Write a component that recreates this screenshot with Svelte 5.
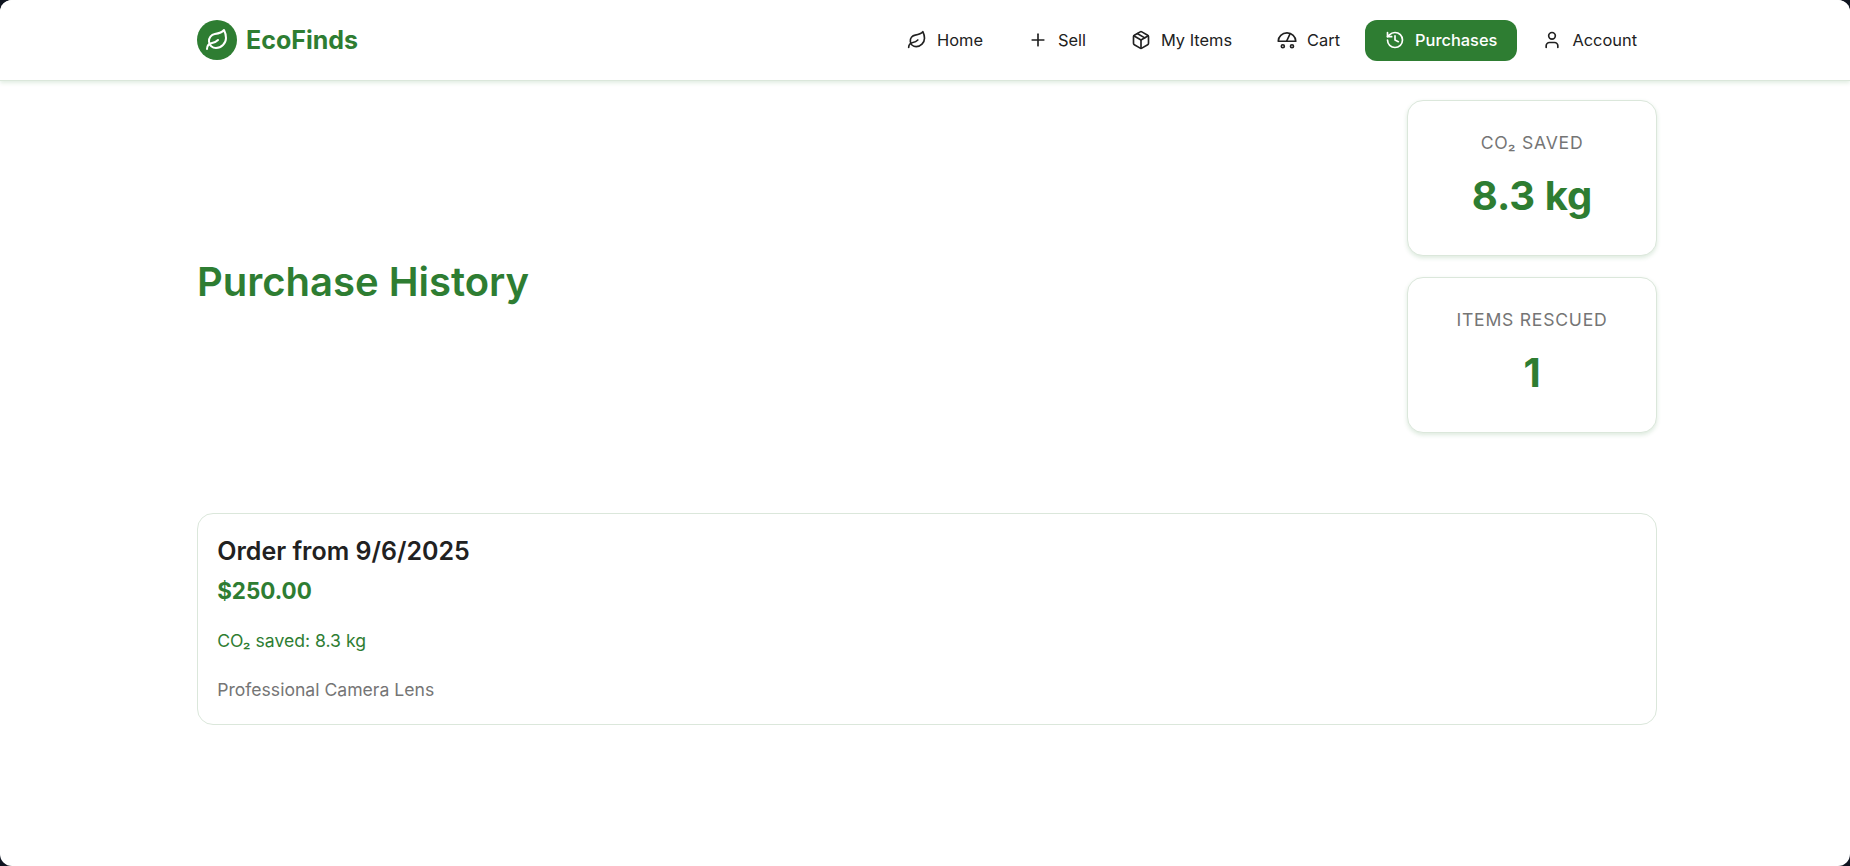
<script>
  const links = [
    { label: 'Home', icon: 'leaf' },
    { label: 'Sell', icon: 'plus' },
    { label: 'My Items', icon: 'box' },
    { label: 'Cart', icon: 'cart' },
    { label: 'Purchases', icon: 'history', active: true },
    { label: 'Account', icon: 'user' }
  ];
</script>

{#snippet leaf(size)}
  <svg width={size} height={size} viewBox="0 0 24 24" fill="none" stroke="currentColor" stroke-width="2" stroke-linecap="round" stroke-linejoin="round">
    <path d="M11 20A7 7 0 0 1 9.8 6.1C15.5 5 17 4.48 19 2c1 2 2 4.18 2 8 0 5.5-4.78 10-10 10Z" />
    <path d="M2 21c0-3 1.85-5.36 5.08-6C9.5 14.52 12 13 13 12" />
  </svg>
{/snippet}

{#snippet icon(name)}
  {#if name === 'leaf'}
    {@render leaf(20)}
  {:else}
    <svg width="20" height="20" viewBox="0 0 24 24" fill="none" stroke="currentColor" stroke-width="2" stroke-linecap="round" stroke-linejoin="round">
      {#if name === 'plus'}
        <path d="M5 12h14" /><path d="M12 5v14" />
      {:else if name === 'box'}
        <path d="M21 8a2 2 0 0 0-1-1.73l-7-4a2 2 0 0 0-2 0l-7 4A2 2 0 0 0 3 8v8a2 2 0 0 0 1 1.73l7 4a2 2 0 0 0 2 0l7-4A2 2 0 0 0 21 16Z" />
        <path d="m7.5 4.27 9 5.15" /><path d="M3.3 7 12 12l8.7-5" /><path d="M12 22V12" />
      {:else if name === 'cart'}
        <path d="M1.5 13.5a10.5 10 0 0 1 21 0Z" />
        <path d="M15.5 5 11.5 13.5" />
        <circle cx="7" cy="19.5" r="1.8" /><circle cx="18" cy="19.5" r="1.8" />
      {:else if name === 'history'}
        <path d="M3 12a9 9 0 1 0 9-9 9.75 9.75 0 0 0-6.74 2.74L3 8" />
        <path d="M3 3v5h5" /><path d="M12 7v5l4 2" />
      {:else if name === 'user'}
        <path d="M19 21v-2a4 4 0 0 0-4-4H9a4 4 0 0 0-4 4v2" />
        <circle cx="12" cy="7" r="4" />
      {/if}
    </svg>
  {/if}
{/snippet}

<div class="window">
  <header class="topbar">
    <div class="bar-inner">
      <div class="brand">
        <span class="logo">{@render leaf(24)}</span>
        <span class="brand-name">EcoFinds</span>
      </div>
      <nav class="nav">
        {#each links as link}
          <a class="nav-link" class:active={link.active} href="#top">
            {@render icon(link.icon)}
            <span>{link.label}</span>
          </a>
        {/each}
      </nav>
    </div>
  </header>

  <main class="main">
    <section class="head">
      <h1>Purchase History</h1>
      <div class="stats">
        <div class="stat">
          <div class="stat-label">CO₂ Saved</div>
          <div class="stat-value">8.3 kg</div>
        </div>
        <div class="stat">
          <div class="stat-label">Items Rescued</div>
          <div class="stat-value">1</div>
        </div>
      </div>
    </section>

    <article class="order">
      <h2>Order from 9/6/2025</h2>
      <div class="price">$250.00</div>
      <div class="co2">CO₂ saved: 8.3 kg</div>
      <div class="item">Professional Camera Lens</div>
    </article>
  </main>
</div>

<style>
  :global(body) {
    margin: 0;
    background: #0f1420;
  }
  .window {
    height: 866px;
    overflow: hidden;
    background: #fff;
    border-radius: 12px;
    font-family: Inter, "Liberation Sans", sans-serif;
    color: #212121;
  }
  .topbar {
    height: 81px;
    background: #fff;
    border-bottom: 1px solid #dbe7db;
    box-shadow: 0 2px 4px rgba(46, 125, 50, 0.14);
    box-sizing: border-box;
  }
  .bar-inner {
    width: 1460px;
    height: 100%;
    margin-left: 197px;
    display: flex;
    align-items: center;
    justify-content: space-between;
  }
  .brand {
    display: flex;
    align-items: center;
    gap: 9px;
  }
  .logo {
    width: 40px;
    height: 40px;
    border-radius: 50%;
    background: #2e7d32;
    color: #fff;
    display: flex;
    align-items: center;
    justify-content: center;
  }
  .brand-name {
    font-size: 25px;
    font-weight: 700;
    color: #2e7d32;
  }
  .nav {
    display: flex;
    align-items: center;
    gap: 5px;
  }
  .nav-link {
    display: flex;
    align-items: center;
    gap: 10px;
    height: 41px;
    padding: 0 20px;
    border-radius: 12px;
    font-size: 16.4px;
    font-weight: 400;
    color: #212121;
    text-decoration: none;
    box-sizing: border-box;
  }
  .nav-link.active {
    background: #2e7d32;
    color: #fff;
    font-weight: 500;
  }
  .main {
    width: 1460px;
    margin-left: 197px;
    padding-top: 19px;
  }
  .head {
    display: flex;
    align-items: center;
    justify-content: space-between;
    margin-bottom: 80px;
  }
  h1 {
    margin: 30px 0 0;
    font-size: 40px;
    font-weight: 600;
    color: #2e7d32;
  }
  .stats {
    width: 250px;
    display: flex;
    flex-direction: column;
    gap: 21px;
  }
  .stat {
    height: 156px;
    box-sizing: border-box;
    padding: 31px 20px;
    border: 1px solid #dbe7db;
    border-radius: 16px;
    background: #fff;
    box-shadow: 0 2px 4px rgba(46, 125, 50, 0.16);
    text-align: center;
  }
  .stat-label {
    font-size: 17.6px;
    font-weight: 400;
    letter-spacing: 0.75px;
    text-transform: uppercase;
    color: #757575;
  }
  .stat-value {
    margin-top: 18px;
    font-size: 40px;
    font-weight: 700;
    color: #2e7d32;
  }
  .order {
    height: 212px;
    box-sizing: border-box;
    padding: 22px 19.2px;
    border: 1px solid #dbe7db;
    border-radius: 16px;
    background: #fff;
  }
  h2 {
    margin: 0;
    font-size: 25px;
    font-weight: 600;
    color: #212121;
  }
  .price {
    margin-top: 11px;
    font-size: 22.4px;
    font-weight: 700;
    color: #2e7d32;
  }
  .co2 {
    margin-top: 26px;
    font-size: 17.6px;
    color: #2e7d32;
  }
  .item {
    margin-top: 28px;
    font-size: 17.6px;
    color: #757575;
  }
</style>
